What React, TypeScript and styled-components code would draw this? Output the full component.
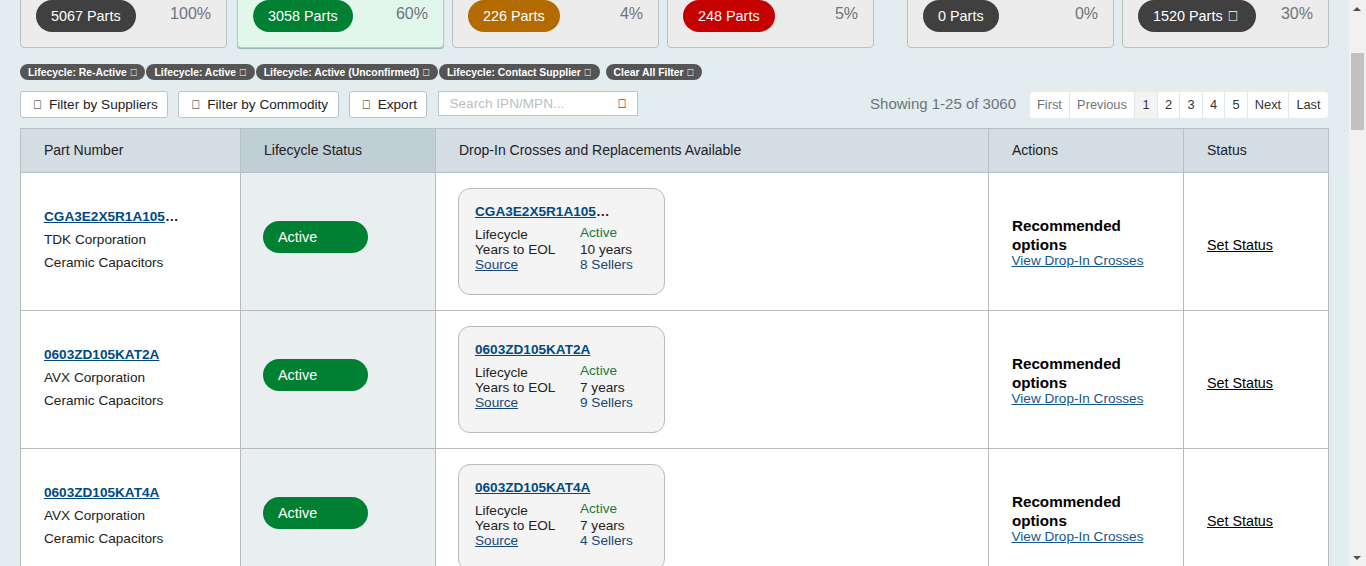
import React from "react";
import styled, { createGlobalStyle } from "styled-components";

const Global = createGlobalStyle`
  html, body { margin: 0; padding: 0; height: 566px; overflow: hidden; background: #e3ecef; }
  body { font-family: "Liberation Sans", Arial, sans-serif; font-size: 14px; color: #000; }
  * { box-sizing: border-box; }
`;

const Shell = styled.div`display: flex; width: 1366px; height: 566px; overflow: hidden;`;
const Page = styled.main`flex: 1; min-width: 0; padding: 0 20px; overflow: hidden;`;

const Scrollbar = styled.div`
  position: relative; width: 17px; height: 566px; background: #f1f1f1; flex: none;
`;
const Thumb = styled.div`position: absolute; left: 2px; top: 53px; width: 13px; height: 77px; background: #c1c1c1;`;
const Arrow = styled.div<{ $down?: boolean }>`
  position: absolute; left: 4px; width: 0; height: 0;
  border-left: 4px solid transparent; border-right: 4px solid transparent;
  ${p => p.$down
    ? "bottom: 6px; border-top: 4px solid #505050;"
    : "top: 7px; border-bottom: 4px solid #505050;"}
`;

const Cards = styled.section`display: flex; margin-top: -24px; height: 72px;`;
const Card = styled.div<{ $selected?: boolean; $gap?: number }>`
  flex: none; width: 207px; height: 72px; margin-left: ${p => p.$gap ?? 0}px;
  padding: 24px 15px 0; display: flex; justify-content: space-between; align-items: flex-start;
  border: 1px solid ${p => (p.$selected ? "#b5cfc2" : "#bcbfc1")}; border-radius: 4px;
  background: ${p => (p.$selected ? "#e2f7eb" : "#ececec")};
  ${p => p.$selected && "box-shadow: 0 1px 1px rgba(0,80,40,.35);"}
`;
const Pill = styled.span<{ $color: string }>`
  display: inline-block; height: 32px; line-height: 33px; padding: 0 15px; border-radius: 16px; margin-top: -1px;
  background: ${p => p.$color}; color: #fff; font-size: 14.4px; white-space: nowrap;
`;
const PillIcon = styled.span`margin-left: 1px; margin-right: 3px;`;
const Percent = styled.span`font-size: 16px; line-height: 26px; color: #6c757d;`;

const Chips = styled.div`display: flex; margin-top: 16px; height: 16px;`;
const Chip = styled.span<{ $gap?: number }>`
  height: 16px; line-height: 17px; padding: 0 8px; margin-left: ${p => p.$gap ?? 0}px;
  border-radius: 8px; background: #555; color: #fff; font-size: 10.4px; font-weight: 700; white-space: nowrap;
`;

const Toolbar = styled.div`display: flex; align-items: flex-start; margin-top: 11px; height: 27px;`;
const ToolButton = styled.button`
  height: 27px; padding: 0 9.5px 0 12px; margin-right: 10px; background: #fff; color: #222;
  border: 1px solid #b7c4cc; border-radius: 3px; font: 13.6px "Liberation Sans", Arial, sans-serif;
  display: flex; align-items: center; gap: 7px;
`;
const Tofu = styled.span`font-size: 12px;`;
const Search = styled.label`
  width: 200px; height: 25px; margin-left: 1px; background: #fff; border: 1px solid #bcc6cc; display: flex;
  align-items: center; justify-content: space-between; padding: 0 11px 0 10px; color: #b9bfc4; font-size: 13.6px;
`;
const SearchIcon = styled.span`color: #000; font-size: 12px;`;
const Showing = styled.span`margin-left: auto; margin-right: 14px; color: #6c757d; font-size: 15px; line-height: 26px;`;
const Pager = styled.nav`display: flex; height: 26px; margin-top: 1px; margin-right: 1px; background: #fff; border-radius: 4px; overflow: hidden;`;
const PageItem = styled.span<{ $active?: boolean; $muted?: boolean; $w: number }>`
  width: ${p => p.$w}px; display: flex; align-items: center; justify-content: center; padding-bottom: 2px;
  font-size: 12.8px; border-left: 1px solid #e4e7ea;
  &:first-child { border-left: 0; }
  color: ${p => (p.$muted ? "#6c757d" : "#333")};
  background: ${p => (p.$active ? "#f3f3f3" : "#fff")};
`;

const Table = styled.table`
  width: 1308px; margin-top: 10px; border-collapse: collapse; table-layout: fixed; background: #fff;
`;
const Th = styled.th<{ $sorted?: boolean; $w: number }>`
  width: ${p => p.$w}px; height: 44px; padding: 0 0 2px 23px; text-align: left; font-weight: 400; font-size: 14px; color: #222;
  background: ${p => (p.$sorted ? "#c0ced6" : "#d4dde4")}; border: 1px solid #b5c1c9;
`;
const Td = styled.td<{ $sorted?: boolean }>`
  height: 138px; padding: 0 0 0 23px; vertical-align: middle; border: 1px solid #b9b9b9;
  background: ${p => (p.$sorted ? "#e9eef1" : "#fff")};
`;
const PartStack = styled.div`padding-bottom: 4px; line-height: 23px; font-size: 13.6px; color: #222;`;
const PartName = styled.div`white-space: nowrap; font-weight: 700; font-size: 13.6px; color: #222;`;
const PartLink = styled.a`color: #004a80; text-decoration: underline;`;
const StatusPill = styled.span`
  display: block; width: 105px; height: 32px; line-height: 32px; padding-left: 15px; margin: 0 0 10px -1px;
  border-radius: 16px; background: #008033; color: #fff; font-size: 14.4px;
`;
const Cross = styled.div`
  width: 207px; height: 107px; padding: 15px 16px 0; background: #f4f4f4; border: 1px solid #bbb; border-radius: 12px; margin-left: -1px;
`;
const CrossName = styled(PartName)`line-height: 16px; margin-bottom: 5px;`;
const CrossGrid = styled.div`display: grid; grid-template-columns: 105px 1fr; font-size: 13.6px; line-height: 15px; color: #222;`;
const LifecycleLabel = styled.span`padding-top: 2px;`;
const Green = styled.span`color: #1a7a3c; margin-bottom: 2px;`;
const Blue = styled.span`color: #15477a;`;
const Source = styled.a`color: #15477a; text-decoration: underline;`;
const Rec = styled.div`font-weight: 700; font-size: 15.2px; line-height: 19px; color: #000; width: 130px;`;
const ViewLink = styled.a`display: block; padding: 2px 0; color: #15568a; text-decoration: underline; font-size: 13.6px; line-height: 10px; margin-left: -0.5px;`;
const SetStatus = styled.a`display: block; padding-top: 6px; color: #000; text-decoration: underline; font-size: 14.3px;`;

const cards = [
  { label: "5067 Parts", pct: "100%", color: "#404040", gap: 0 },
  { label: "3058 Parts", pct: "60%", color: "#008033", gap: 10, selected: true },
  { label: "226 Parts", pct: "4%", color: "#b36b00", gap: 8 },
  { label: "248 Parts", pct: "5%", color: "#c40000", gap: 8 },
  { label: "0 Parts", pct: "0%", color: "#404040", gap: 33 },
  { label: "1520 Parts", pct: "30%", color: "#404040", gap: 8, info: true },
];
const chips = [
  { t: "Lifecycle: Re-Active \uf00d", g: 0 },
  { t: "Lifecycle: Active \uf00d", g: 1 },
  { t: "Lifecycle: Active (Unconfirmed) \uf00d", g: 1 },
  { t: "Lifecycle: Contact Supplier \uf00d", g: 1 },
  { t: "Clear All Filter \uf00d", g: 6 },
];
const pages = [
  { t: "First", w: 39, muted: true }, { t: "Previous", w: 65, muted: true }, { t: "1", w: 23, active: true },
  { t: "2", w: 22 }, { t: "3", w: 23 }, { t: "4", w: 22 }, { t: "5", w: 23 }, { t: "Next", w: 41 }, { t: "Last", w: 40 },
];
const rows = [
  { pn: "CGA3E2X5R1A105", more: "…", mfr: "TDK Corporation", years: "10 years", sellers: "8 Sellers" },
  { pn: "0603ZD105KAT2A", more: "", mfr: "AVX Corporation", years: "7 years", sellers: "9 Sellers" },
  { pn: "0603ZD105KAT4A", more: "", mfr: "AVX Corporation", years: "7 years", sellers: "4 Sellers" },
];

export default function App() {
  return (
    <Shell>
      <Global />
      <Page>
        <Cards>
          {cards.map(c => (
            <Card key={c.label} $selected={c.selected} $gap={c.gap}>
              <Pill $color={c.color}>{c.label}{c.info && <> <PillIcon>{"\uf05a"}</PillIcon></>}</Pill>
              <Percent>{c.pct}</Percent>
            </Card>
          ))}
        </Cards>
        <Chips>
          {chips.map(c => <Chip key={c.t} $gap={c.g}>{c.t}</Chip>)}
        </Chips>
        <Toolbar>
          <ToolButton><Tofu>{"\uf0b0"}</Tofu>Filter by Suppliers</ToolButton>
          <ToolButton><Tofu>{"\uf0b0"}</Tofu>Filter by Commodity</ToolButton>
          <ToolButton><Tofu>{"\uf019"}</Tofu>Export</ToolButton>
          <Search>Search IPN/MPN...<SearchIcon>{"\uf002"}</SearchIcon></Search>
          <Showing>Showing 1-25 of 3060</Showing>
          <Pager>
            {pages.map(p => <PageItem key={p.t} $w={p.w} $active={p.active} $muted={p.muted}>{p.t}</PageItem>)}
          </Pager>
        </Toolbar>
        <Table>
          <thead>
            <tr>
              <Th $w={220}>Part Number</Th>
              <Th $w={195} $sorted>Lifecycle Status</Th>
              <Th $w={553}>Drop-In Crosses and Replacements Available</Th>
              <Th $w={195}>Actions</Th>
              <Th $w={145}>Status</Th>
            </tr>
          </thead>
          <tbody>
            {rows.map(r => (
              <tr key={r.pn}>
                <Td>
                  <PartStack>
                    <PartName><PartLink>{r.pn}</PartLink>{r.more}</PartName>
                    <div>{r.mfr}</div>
                    <div>Ceramic Capacitors</div>
                  </PartStack>
                </Td>
                <Td $sorted><StatusPill>Active</StatusPill></Td>
                <Td>
                  <Cross>
                    <CrossName><PartLink>{r.pn}</PartLink>{r.more}</CrossName>
                    <CrossGrid>
                      <LifecycleLabel>Lifecycle</LifecycleLabel><Green>Active</Green>
                      <span>Years to EOL</span><span>{r.years}</span>
                      <Source>Source</Source><Blue>{r.sellers}</Blue>
                    </CrossGrid>
                  </Cross>
                </Td>
                <Td>
                  <Rec>Recommended options</Rec>
                  <ViewLink>View Drop-In Crosses</ViewLink>
                </Td>
                <Td><SetStatus>Set Status</SetStatus></Td>
              </tr>
            ))}
          </tbody>
        </Table>
      </Page>
      <Scrollbar>
        <Arrow />
        <Thumb />
        <Arrow $down />
      </Scrollbar>
    </Shell>
  );
}
